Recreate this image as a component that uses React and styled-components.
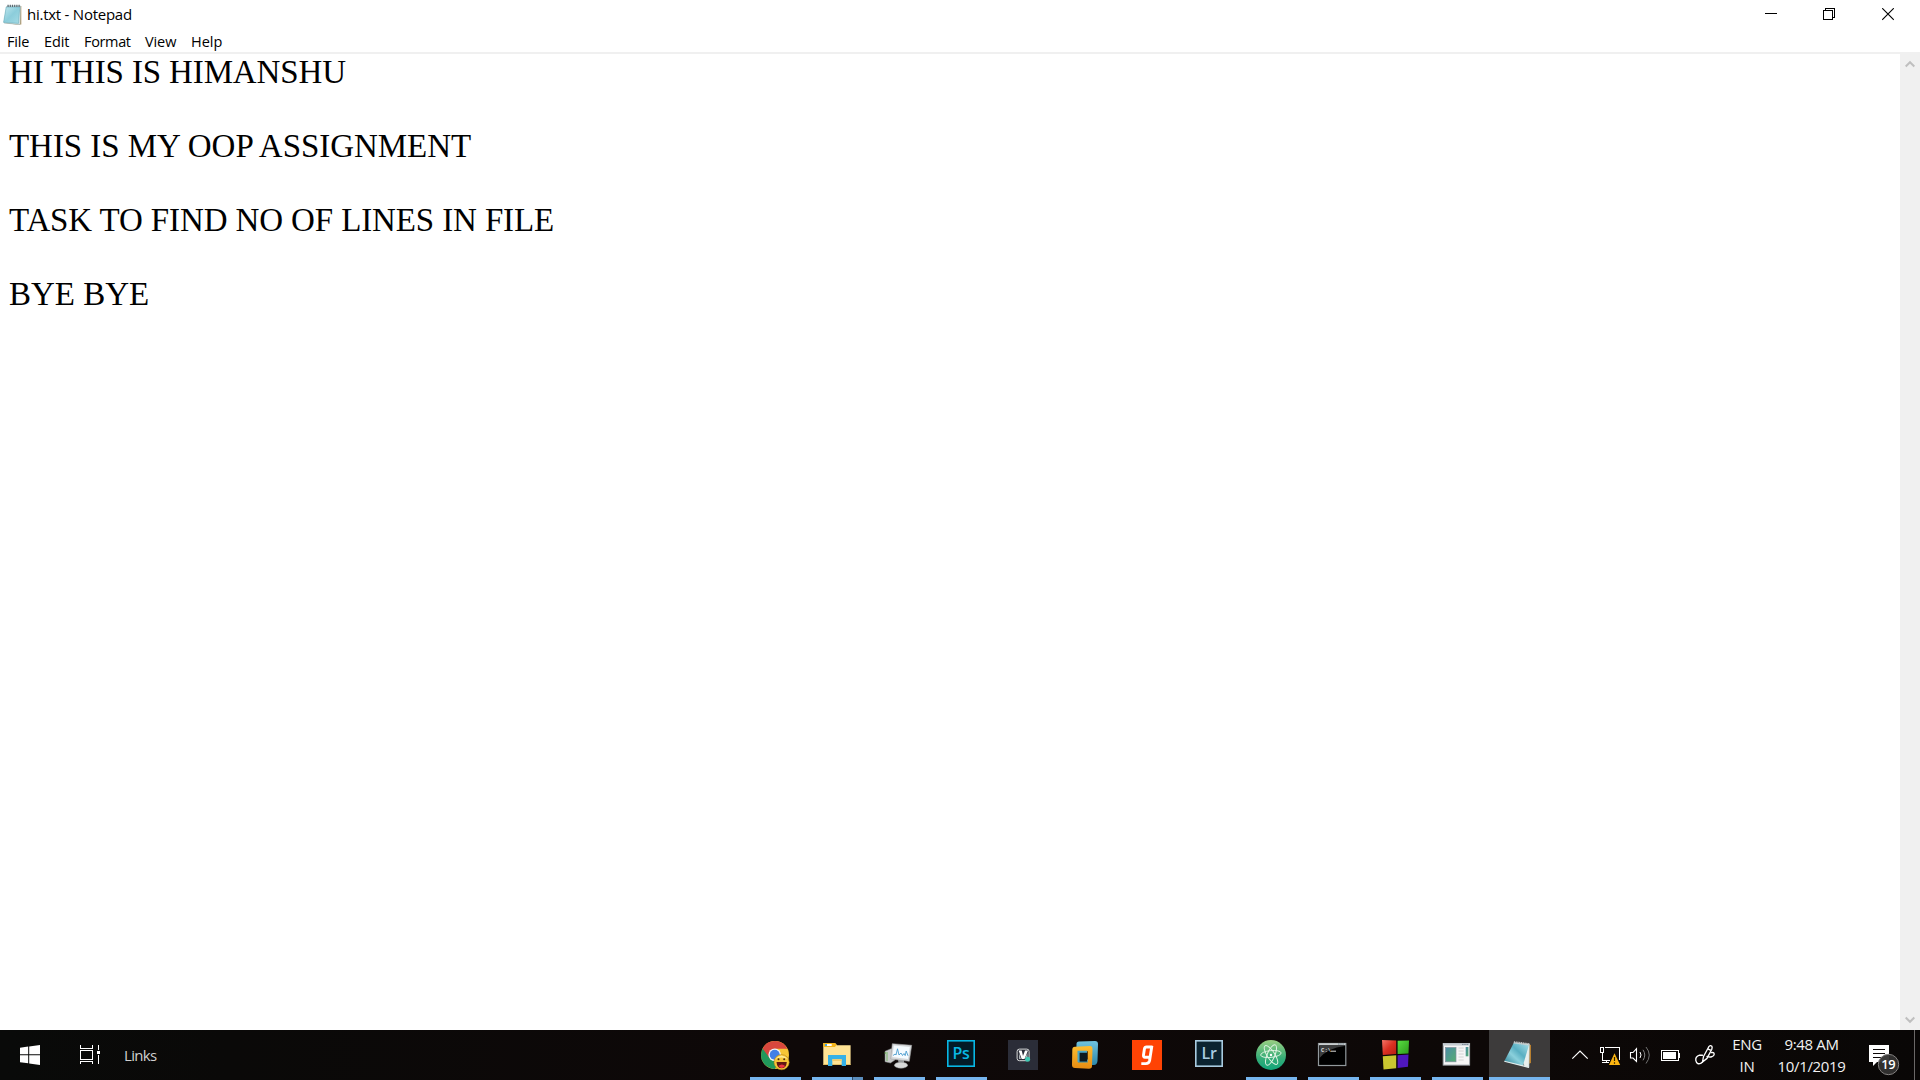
import React from "react";
import styled, { createGlobalStyle } from "styled-components";

const GlobalStyle = createGlobalStyle`
  * { box-sizing: border-box; }
  html, body { margin: 0; padding: 0; overflow: hidden; background: #fff; }
  svg { display: block; flex: none; }
`;

const Screen = styled.div`
  width: 1920px;
  height: 1080px;
  display: flex;
  flex-direction: column;
  background: #fff;
  color: #000;
  font-family: "Open Sans", "Noto Sans", sans-serif;
  font-size: 14.5px;
`;

const TitleBar = styled.header`
  height: 29px;
  display: flex;
  align-items: center;
  padding-left: 3px;
`;

const Title = styled.div`
  flex: 1;
  margin-left: 4px;
  line-height: 29px;
  font-size: 15px;
  letter-spacing: -0.25px;
  white-space: nowrap;
`;

const WindowButtons = styled.div`
  display: flex;
  padding-right: 2px;
`;

const WindowButton = styled.div`
  width: ${(p) => p.$width}px;
  height: 29px;
  display: flex;
  align-items: center;
  justify-content: center;
`;

const MenuBar = styled.nav`
  height: 23px;
  display: flex;
  padding-left: 7px;
`;

const MenuItem = styled.span`
  width: ${(p) => p.$width}px;
  line-height: 25px;
  letter-spacing: ${(p) => p.$spacing}px;
  white-space: nowrap;
`;

const Editor = styled.main`
  flex: 1;
  min-height: 0;
  display: flex;
  border-top: 2px solid #f0f0f0;
`;

const Page = styled.div`
  flex: 1;
  padding: 0 0 0 9px;
  font-family: "Liberation Serif", "Times New Roman", serif;
  font-size: 33px;
`;

const Line = styled.div`
  height: 37px;
  line-height: 37px;
  letter-spacing: ${(p) => p.$spacing}px;
  white-space: pre;
`;

const ScrollBar = styled.div`
  width: 20px;
  background: #f0f0f0;
  display: flex;
  flex-direction: column;
  justify-content: space-between;
  align-items: center;
  padding: 6px 1px 6px 0;
`;

const TaskBar = styled.footer`
  height: 50px;
  display: flex;
  background: linear-gradient(90deg, #090a09 0, #0a0908 230px, #0e0808 800px, #0d0807 1500px, #090706 1920px);
  color: #fff;
  font-size: 15px;
`;

const StartArea = styled.div`
  width: 744px;
  display: flex;
  align-items: center;
  gap: 40px;
  padding-left: 20px;
`;

const LinksLabel = styled.span`
  margin-left: -17px;
  padding-bottom: 1px;
  color: #d0d0d0;
  letter-spacing: -0.7px;
`;

const Apps = styled.div`
  display: flex;
`;

const AppSlot = styled.div`
  width: 62px;
  height: 50px;
  padding-top: 5px;
  display: flex;
  flex-direction: column;
  align-items: center;
  background: ${(p) => (p.$active ? "linear-gradient(90deg, transparent 1px, #3d3b3b 1px)" : "none")};
`;

const Underline = styled.div`
  width: ${(p) => (p.$active ? 61 : 51)}px;
  height: 3px;
  margin-top: 2px;
  margin-left: ${(p) => (p.$active ? 1 : 0)}px;
  background: ${(p) => (p.$stacked ? "linear-gradient(90deg, #76b5ee 40px, #2e4a68 40px, #2e4a68 41px, #5b8dbd 41px)" : "#76b5ee")};
`;

const Tray = styled.div`
  display: flex;
  align-items: center;
  margin-left: 15px;
`;

const Stack = styled.div`
  width: ${(p) => p.$width}px;
  display: flex;
  flex-direction: column;
  align-items: center;
  line-height: 22.5px;
  letter-spacing: ${(p) => p.$spacing}px;
  color: #f2f2f2;
  white-space: nowrap;
`;

const ActionCenter = styled.div`
  padding-top: 8px;
  margin-left: 15px;
`;

const ShowDesktop = styled.div`
  width: 6px;
  height: 50px;
  margin-left: 13px;
  border-left: 1px solid #6a6867;
`;

const IconSvg = ({ children }) => (
  <svg width="40" height="40" viewBox="0 0 40 40">{children}</svg>
);

const PadIcon = () => (
  <svg width="20" height="22" viewBox="0 0 20 22">
    <defs>
      <linearGradient id="pad" x1="0" y1="0" x2="1" y2="1">
        <stop offset="0" stopColor="#bfe6ee" />
        <stop offset="0.5" stopColor="#8ccddb" />
        <stop offset="1" stopColor="#a4dbe5" />
      </linearGradient>
    </defs>
    <path d="M4 2 L18.3 2 L18.3 20.5 L13 20.5 L1 19Z" fill="#b89a69" />
    <path d="M4 2 L17.6 2 L17 20.5 L1 19Z" fill="#e7eff0" stroke="#8aaab0" strokeWidth=".5" />
    <path d="M3.2 3 L16.8 3 L15.5 19.4 L0.6 18.3Z" fill="url(#pad)" stroke="#69acbc" strokeWidth=".6" />
    <path d="M4.5 1.8 H17" stroke="#5b6970" strokeWidth="2.2" strokeDasharray="1.2 1" />
  </svg>
);

const Chrome = () => (
  <IconSvg>
    <circle cx="20" cy="20" r="14" fill="#f7c636" />
    <path d="M20 20 L7.9 13 A14 14 0 0 0 20 34 L25 24Z" fill="#20995b" />
    <path d="M7.6 13.5 A14 14 0 0 1 32.4 13.7 L20 13.7 L14.5 23Z" fill="#d9473d" />
    <circle cx="19.7" cy="19.7" r="6.3" fill="#f4f5f7" />
    <circle cx="19.7" cy="19.7" r="5" fill="#427fe6" />
    <circle cx="26.6" cy="27.2" r="7.6" fill="#f7c637" stroke="#a8761d" strokeWidth=".5" />
    <path d="M20 24 Q26.5 17 33 24 Q26 21 20 24" fill="#ffe991" />
    <path d="M21.5 27 H31.8 Q31.3 33.3 26.6 33.3 Q22 33.3 21.5 27Z" fill="#611713" />
    <path d="M23.3 31 Q27 28 30.2 31 Q26.8 35 23.3 31" fill="#ed3541" />
    <circle cx="23.5" cy="24.3" r="1" fill="#4b2b13" />
    <circle cx="29.2" cy="24.3" r="1" fill="#4b2b13" />
  </IconSvg>
);

const Folder = () => (
  <IconSvg>
    <path d="M6.3 8 H18 L20 10.3 H33.6 V29.7 H6.3Z" fill="#ffe394" />
    <path d="M6.3 8 H18 L19.8 10 L17.8 12 H6.3Z" fill="#f4b51c" />
    <rect x="8" y="9" width="6.7" height="2" fill="#fff" />
    <rect x="8" y="9" width="2" height="2" fill="#47a6db" />
    <path d="M6.3 29.5 H33.6" stroke="#e5bf62" />
    <path d="M11 31 V20 H29 V31 H24.7 V24.3 H15.3 V31Z" fill="#36b1e7" />
    <path d="M15.3 24.3 H24.7 V26 H15.3Z" fill="#f2ca6a" />
  </IconSvg>
);

const Monitor = () => (
  <IconSvg>
    <path d="M6 16.3 L12 13.7 L16 15 V25 L11.5 28 L6 26.7Z" fill="#c8cacb" stroke="#868a8b" strokeWidth=".5" />
    <path d="M6.3 17 V19 M8 17 V26" stroke="#63ae4c" strokeWidth=".8" />
    <path d="M19 25 L25 25 L25 30 H20Z" fill="#999c9e" />
    <ellipse cx="22" cy="30.2" rx="6.6" ry="3" fill="#d9dada" stroke="#929595" strokeWidth=".5" />
    <path d="M13.3 8.7 L32.7 10.3 L30.3 26.3 L11.7 24Z" fill="#d6d8d9" stroke="#9da0a1" strokeWidth=".6" />
    <path d="M14.8 10.5 L30.8 12 L29 24 L13.4 22Z" fill="#f5fbff" />
    <path d="M14 20.5 L16.2 19 L17 20 L18.5 13.8 L20 20 L22 18 L23.5 20.5 L25 18.5 L26.2 20.6 L27.2 16 L29 20.8" fill="none" stroke="#4a9cce" strokeWidth=".9" />
  </IconSvg>
);

const AdobeBox = ({ color, fill, label }) => (
  <IconSvg>
    <rect x="6.8" y="5.8" width="26.4" height="25.4" fill={fill} stroke={color} strokeWidth="1.6" />
    <text x="20" y="23.8" textAnchor="middle" fontFamily="Open Sans, sans-serif" fontWeight="600" fontSize="16" letterSpacing="-.3" fill={color}>{label}</text>
  </IconSvg>
);

const MusicApp = () => (
  <IconSvg>
    <rect x="5" y="5" width="30" height="30" fill="#2b2d38" />
    <rect x="14.1" y="14.1" width="12" height="11.6" rx="2.3" fill="none" stroke="#d8dadb" strokeWidth="1" />
    <path d="M15.6 15.6 H18.7 L20 21 L22 15.6 H25 L21.5 24 H18.7Z" fill="#fff" />
    <path d="M16 18 V24 H18Z M24.5 18 V23 H22Z" fill="#aeb3b7" />
    <circle cx="24.6" cy="24.3" r="2.5" fill="#3fc7b2" />
  </IconSvg>
);

const VirtualBoxes = () => (
  <IconSvg>
    <defs>
      <linearGradient id="vmblue" x1="0" y1="0" x2="0" y2="1"><stop stopColor="#70c3df" /><stop offset="1" stopColor="#2c87a9" /></linearGradient>
      <linearGradient id="vmgold" x1="0" y1="0" x2="0" y2="1"><stop stopColor="#fdbd30" /><stop offset="1" stopColor="#e68b12" /></linearGradient>
    </defs>
    <path fillRule="evenodd" fill="url(#vmblue)" d="M14 6.5 L30 6 Q33 6 33 9 L32.5 26 Q32 30 29 30 L14 30 Q11 30 11 27 L11.5 9 Q11.5 6.5 14 6.5 M16 12 V24.5 H26.5 V12Z" />
    <path fillRule="evenodd" fill="url(#vmgold)" d="M10 11.7 L25 11 Q27.5 11 27.5 14 L27 31 Q27 33.8 24 33.8 L10 33 Q7 33 7 30 L7.3 14.5 Q7.3 12 10 11.7 M13 16.3 V27.5 H22.7 V16.3Z" />
    <path d="M14.2 17 H22 V26.5 H14.2Z" fill="#0c1920" />
    <path fill="none" stroke="#4ba7c6" strokeWidth="2" d="M13.5 27 V16.8 H22" />
  </IconSvg>
);

const MusicG = () => (
  <IconSvg>
    <rect x="5" y="5" width="30" height="30" fill="#ff4304" />
    <path d="M24.9 10.8 L22.6 25.5 Q22 28.6 18.8 28.6 H14.3 M25.5 12 H19.5 Q17.8 12 17.4 14 L16.5 20 Q16.2 22.2 18 22.2 H22.8" fill="none" stroke="#fff" strokeWidth="2.9" />
  </IconSvg>
);

const Atom = () => (
  <IconSvg>
    <defs><linearGradient id="atom" x1="0" y1="0" x2="0" y2="1"><stop stopColor="#9bcf83" /><stop offset=".6" stopColor="#37ad78" /><stop offset="1" stopColor="#11a57a" /></linearGradient></defs>
    <circle cx="20" cy="20" r="15" fill="url(#atom)" />
    <g fill="none" stroke="#e0f3e3" strokeWidth=".95">
      <ellipse cx="20" cy="19" rx="10.3" ry="3.4" transform="rotate(-6 20 20)" />
      <ellipse cx="20" cy="20" rx="11" ry="3.8" transform="rotate(57 20 20)" />
      <ellipse cx="20" cy="20" rx="11" ry="3.8" transform="rotate(113 20 20)" />
    </g>
    <circle cx="20" cy="20" r="1.2" fill="#fff" />
  </IconSvg>
);

const Terminal = () => (
  <IconSvg>
    <rect x="5.5" y="8.5" width="27.3" height="22" fill="#000" stroke="#92999d" strokeWidth="1.2" />
    <path d="M6 9.3 H32.5" stroke="#c9cdcf" strokeWidth="2" />
    <path d="M25 9 H31.5" stroke="#72808b" strokeWidth="1" strokeDasharray="1.5 .7" />
    <path d="M6.5 11 H31.5 Q15 13 6.5 23Z" fill="#3c3d3e" />
    <text x="8" y="16.8" fill="#ddd" fontFamily="Liberation Mono, monospace" fontWeight="700" fontSize="5.7">C:\</text>
    <path d="M18 16.2 H23" stroke="#ddd" strokeWidth="1" />
  </IconSvg>
);

const Squares = () => (
  <IconSvg>
    <defs>
      <linearGradient id="sqr" x1="0" y1="0" x2="1" y2="1"><stop stopColor="#f77568" /><stop offset=".5" stopColor="#da3022" /><stop offset="1" stopColor="#b71c13" /></linearGradient>
      <linearGradient id="sqg" x1="0" y1="0" x2="1" y2="1"><stop stopColor="#58dd42" /><stop offset="1" stopColor="#2f9d1c" /></linearGradient>
    </defs>
    <path d="M7 5 L21.2 5.6 V19 L7.8 20Z" fill="url(#sqr)" />
    <path d="M22.6 5.7 L34 5.5 L33.5 18.5 L22.6 19Z" fill="url(#sqg)" />
    <path d="M7.8 21.2 L21.2 20.3 V33.3 L8.5 34.6Z" fill="#c9c630" />
    <path d="M22.6 20.2 L33.5 19.4 L33 31.7 L22.6 33.1Z" fill="#4f17bd" />
  </IconSvg>
);

const AppWindow = () => (
  <IconSvg>
    <defs><linearGradient id="view" x1="0" y1="0" x2="1" y2="1"><stop stopColor="#4c8ca7" /><stop offset="1" stopColor="#55ad70" /></linearGradient></defs>
    <rect x="6.2" y="8.5" width="26.4" height="21.6" fill="#f6f6f6" stroke="#a2a9ae" />
    <path d="M6 9.5 H33" stroke="#c6cdd2" strokeWidth="2.2" />
    <path d="M25 9.4 H31.8" stroke="#778493" strokeDasharray="1.6 .6" />
    <rect x="8.5" y="12.5" width="10.5" height="14.3" fill="url(#view)" stroke="#81909d" strokeWidth=".7" />
    <path d="M21.5 13 H26.7 M21.5 16 H26.7 M21.5 19 H26.7 M21.5 22 H26.7 M21.5 25 H26.7" stroke="#cfcfcf" strokeWidth=".9" />
    <rect x="28.7" y="12" width="2.7" height="9.3" fill="url(#view)" />
  </IconSvg>
);

const NotepadApp = () => (
  <IconSvg>
    <defs><linearGradient id="note" x1="0" y1="1" x2="1" y2="0"><stop stopColor="#22788e" /><stop offset=".4" stopColor="#8bd0dc" /><stop offset=".6" stopColor="#59afc2" /><stop offset="1" stopColor="#a9e0e9" /></linearGradient></defs>
    <path d="M28 9 L32 10 V28 L29 29Z" fill="#b98030" />
    <path d="M15 7.5 L30.5 9 L30 32.4 L25.5 31.5Z" fill="#e8efed" stroke="#a4b6b6" strokeWidth=".5" />
    <path d="M14.7 8 L30 10 L23.8 30.9 L5.3 26.3Z" fill="url(#note)" />
    <path d="M5.3 26.3 L24 30.9 L30 32.4" fill="none" stroke="#e2ecec" strokeWidth="1.1" />
    <path d="M14.8 7.4 L30.3 9.4" stroke="#c7caca" strokeWidth="2.5" strokeDasharray="1.1 .7" />
  </IconSvg>
);

const Start = () => (
  <svg width="20" height="20" viewBox="0 0 20 20" fill="#fff">
    <path d="M0 2.7 L8.2 1.5 V9.3 H0Z M9.2 1.4 L20 0 V9.3 H9.2Z M0 10.3 H8.2 V18.3 L0 17.2Z M9.2 10.3 H20 V20 L9.2 18.5Z" />
  </svg>
);

const TaskView = () => (
  <svg width="21" height="20" viewBox="0 0 21 20" fill="none" stroke="#fff" shapeRendering="crispEdges">
    <path d="M.5 0 V3.5 H12.5 V0 M.5 5.5 H12.5 V14.5 H.5Z M.5 19 V16.5 H12.5 V19 M18.5 0 V5 M18.5 10 V19" />
    <path d="M17 6 H20 V9 H17Z" fill="#fff" stroke="none" />
  </svg>
);

const TrayChevron = () => (
  <svg width="30" height="30" viewBox="0 0 30 30"><path d="M7.3 18.7 L15 11 L22.7 18.7" fill="none" stroke="#fff" strokeWidth="1.2" /></svg>
);
const Network = () => (
  <svg width="30" height="30" viewBox="0 0 30 30">
    <g fill="none" stroke="#fff" shapeRendering="crispEdges">
      <path d="M10 7.5 H24.5 V20 M7.5 14 V20.5 H15 M7 22.5 H14 M11.5 20 V22" />
      <path d="M5.5 7.5 H8.5 V12.5 H5.5Z M7.5 12 V20.5" />
    </g>
    <path d="M19.5 13.3 L25.2 25 H14Z" fill="#fbb511" />
    <path d="M19.5 17 V21 M19.5 22.3 V23.7" stroke="#302000" strokeWidth="1.2" />
  </svg>
);
const Speaker = () => (
  <svg width="30" height="30" viewBox="0 0 30 30" fill="none">
    <path d="M5.5 12.5 H8 L11.5 8.7 V21.5 L8 18 H5.5Z" stroke="#fff" strokeWidth="1.1" />
    <path d="M15 12 Q17 15 15 18" stroke="#fff" />
    <path d="M18 9.8 Q21.5 15 18 20.3" stroke="#858585" />
    <path d="M21 7 Q27.5 15 21 23.5" stroke="#707070" />
  </svg>
);
const Battery = () => (
  <svg width="30" height="30" viewBox="0 0 30 30" shapeRendering="crispEdges">
    <path d="M6.5 10.5 H23.5 V20.5 H6.5Z" fill="none" stroke="#fff" />
    <path d="M8 12 H21 V19 H8Z M24 13 H25 V18 H24Z" fill="#fff" />
  </svg>
);
const Pen = () => (
  <svg width="39" height="30" viewBox="0 0 39 30" fill="none" stroke="#fff" strokeWidth="1.35" strokeLinecap="round" strokeLinejoin="round">
    <path d="M17.5 22 L18.5 16.5 L23.8 6.7 Q25.3 4.8 26.8 6.2 Q27.5 7.3 26.8 9.2 L22 18.4Z M22.8 8.8 L26 10.3" />
    <path d="M17.5 15.2 H14.5 Q10.3 16.5 10.8 20.3 Q11.8 24.8 15.7 23.4 L17.5 22 M22 16.4 C25 17.5 29 17 29.2 14.2 Q29 12 26.2 12.6" />
  </svg>
);

const Notifications = () => (
  <svg width="33" height="36" viewBox="0 0 33 36">
    <path d="M1 4 H21 V21 H9 L5 25 V21 H1Z" fill="#fff" />
    <path d="M5 8.5 H17 M5 12.5 H17 M5 16.5 H13" stroke="#0c0807" strokeWidth="1.2" />
    <circle cx="20.5" cy="23.5" r="10.2" fill="#333130" fillOpacity=".95" stroke="#83807f" />
    <text x="20.2" y="28" textAnchor="middle" fill="#fff" fontFamily="Open Sans, sans-serif" fontSize="12.8" fontWeight="600" letterSpacing="-.3">19</text>
  </svg>
);

const menus = [
  ["File", 37, -0.2], ["Edit", 40, -0.1], ["Format", 61, -0.35], ["View", 46, -0.1], ["Help", 40, 0],
];

const apps = [
  { id: "chrome", icon: <Chrome />, running: true },
  { id: "files", icon: <Folder />, running: true, stacked: true },
  { id: "monitor", icon: <Monitor />, running: true },
  { id: "ps", icon: <AdobeBox color="#08b7e4" fill="#031b27" label="Ps" />, running: true },
  { id: "music", icon: <MusicApp /> },
  { id: "vm", icon: <VirtualBoxes /> },
  { id: "g", icon: <MusicG /> },
  { id: "lr", icon: <AdobeBox color="#a9cbe0" fill="#0b2330" label="Lr" /> },
  { id: "atom", icon: <Atom />, running: true },
  { id: "cmd", icon: <Terminal />, running: true },
  { id: "squares", icon: <Squares />, running: true },
  { id: "window", icon: <AppWindow />, running: true },
  { id: "notepad", icon: <NotepadApp />, running: true, active: true },
];

const lines = [
  ["HI THIS IS HIMANSHU", -0.14],
  ["", 0],
  ["THIS IS MY OOP ASSIGNMENT", -0.05],
  ["", 0],
  ["TASK TO FIND NO OF LINES IN FILE", -0.12],
  ["", 0],
  ["BYE BYE", 0],
];

export default function App() {
  return (
    <Screen>
      <GlobalStyle />
      <TitleBar>
        <PadIcon />
        <Title>hi.txt - Notepad</Title>
        <WindowButtons>
          <WindowButton $width={58}>
            <svg width="12" height="13" viewBox="0 0 12 13"><path d="M0 5.5 H12" stroke="#000" shapeRendering="crispEdges" /></svg>
          </WindowButton>
          <WindowButton $width={58}>
            <svg width="12" height="13" viewBox="0 0 12 13" fill="none" stroke="#000" shapeRendering="crispEdges"><path d="M.5 2.5 H9.5 V11.5 H.5Z M2.5 2.5 V.5 H11.5 V9.5 H9.5" /></svg>
          </WindowButton>
          <WindowButton $width={60}>
            <svg width="12" height="13" viewBox="0 0 12 13"><path d="M.2 .2 L11.8 11.8 M11.8 .2 L.2 11.8" stroke="#000" strokeWidth="1.1" /></svg>
          </WindowButton>
        </WindowButtons>
      </TitleBar>
      <MenuBar>
        {menus.map(([label, width, spacing]) => (
          <MenuItem key={label} $width={width} $spacing={spacing}>{label}</MenuItem>
        ))}
      </MenuBar>
      <Editor>
        <Page>
          {lines.map(([line, spacing], i) => <Line key={i} $spacing={spacing}>{line}</Line>)}
        </Page>
        <ScrollBar>
          <svg width="10" height="8" viewBox="0 0 10 8"><path d="M.7 6.5 L5 2.2 L9.3 6.5" fill="none" stroke="#bfbfbf" strokeWidth="2" /></svg>
          <svg width="10" height="8" viewBox="0 0 10 8"><path d="M.7 1.5 L5 5.8 L9.3 1.5" fill="none" stroke="#bfbfbf" strokeWidth="2" /></svg>
        </ScrollBar>
      </Editor>
      <TaskBar>
        <StartArea>
          <Start />
          <TaskView />
          <LinksLabel>Links</LinksLabel>
        </StartArea>
        <Apps>
          {apps.map((app) => (
            <AppSlot key={app.id} $active={app.active}>
              {app.icon}
              {app.running && <Underline $active={app.active} $stacked={app.stacked} />}
            </AppSlot>
          ))}
        </Apps>
        <Tray>
          <TrayChevron />
          <Network />
          <Speaker />
          <Battery />
          <Pen />
          <Stack $width={46} $spacing={-0.35}><span>ENG</span><span>IN</span></Stack>
          <Stack $width={83} $spacing={-0.35}><span>9:48 AM</span><span>10/1/2019</span></Stack>
          <ActionCenter><Notifications /></ActionCenter>
          <ShowDesktop />
        </Tray>
      </TaskBar>
    </Screen>
  );
}
